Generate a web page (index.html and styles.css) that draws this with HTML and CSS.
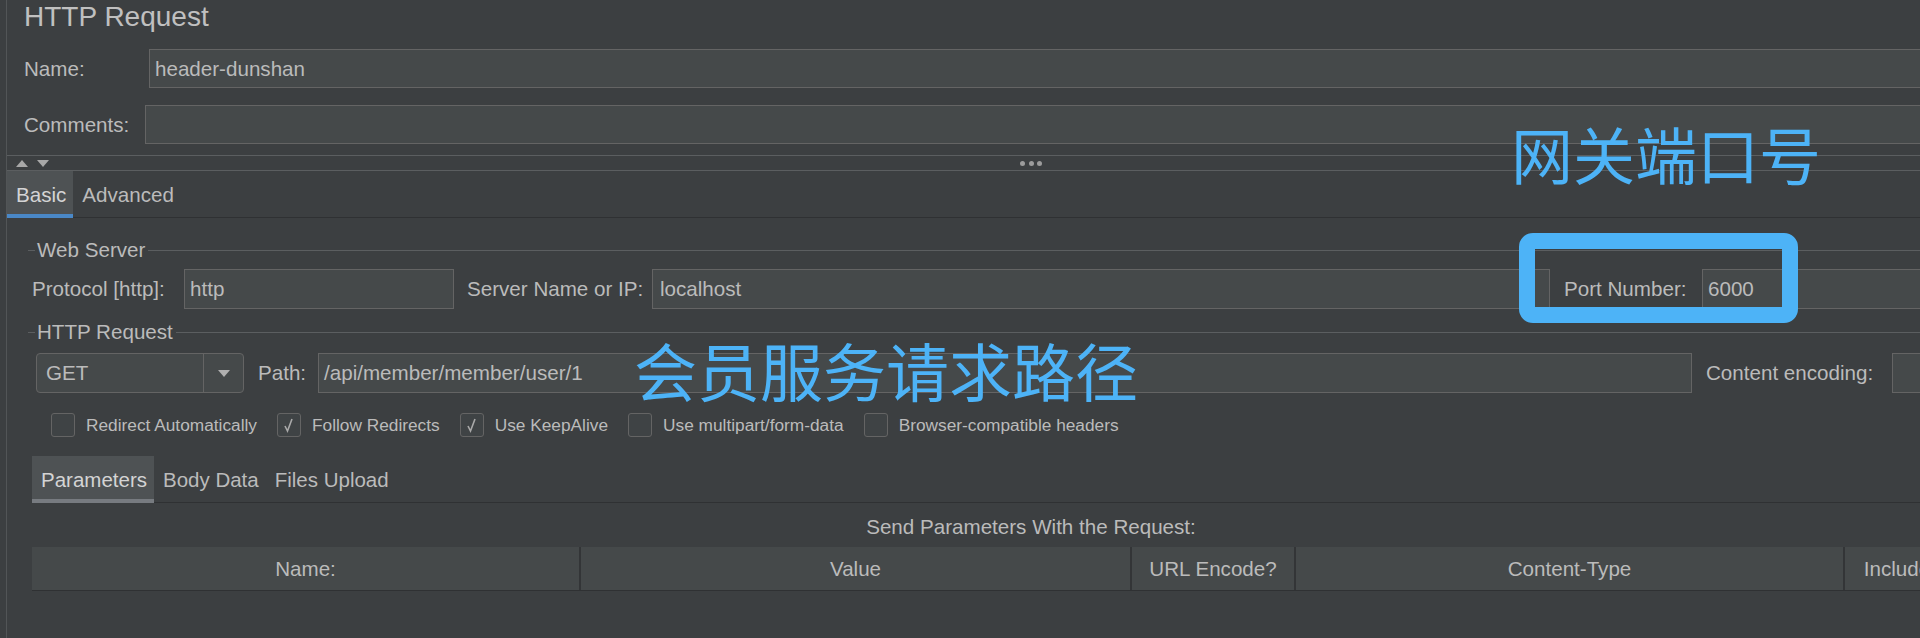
FILE: index.html
```html
<!DOCTYPE html>
<html lang="zh-CN">
<head>
<meta charset="utf-8">
<title>HTTP Request</title>
<link rel="stylesheet" href="styles.css">
</head>
<body>
<div class="panel">
  <div class="title">HTTP Request</div>
  <div class="frow name-row">
    <span class="name-label">Name:</span>
    <div class="input grow">header-dunshan</div>
  </div>
  <div class="frow comments-row">
    <span class="comments-label">Comments:</span>
    <div class="input grow"></div>
  </div>
  <div class="splitter">
    <div class="arrows">
      <svg width="12" height="7" viewBox="0 0 12 7"><polygon points="0,7 12,7 6,0" fill="#a8a8a8"/></svg>
      <svg width="12" height="7" viewBox="0 0 12 7"><polygon points="0,0 12,0 6,7" fill="#a8a8a8"/></svg>
    </div>
    <div class="dots"><i></i><i></i><i></i></div>
    <div></div>
  </div>
  <div class="tabs main-tabs">
    <div class="tab active">Basic</div>
    <div class="tab">Advanced</div>
  </div>

  <div class="group">
    <div class="gtitle"><span>Web Server</span></div>
    <div class="row ws-row">
      <span class="lbl lbl-protocol">Protocol [http]:</span>
      <div class="input in-protocol">http</div>
      <span class="lbl lbl-server">Server Name or IP:</span>
      <div class="input in-server">localhost</div>
      <span class="lbl lbl-port">Port Number:</span>
      <div class="input grow">6000</div>
    </div>

    <div class="gtitle gtitle-req"><span>HTTP Request</span></div>
    <div class="row req-row">
      <div class="combo">
        <div class="combo-text">GET</div>
        <div class="combo-btn">
          <svg width="12" height="7" viewBox="0 0 12 7"><polygon points="0,0 12,0 6,7" fill="#b0b0b0"/></svg>
        </div>
      </div>
      <span class="lbl lbl-path">Path:</span>
      <div class="input in-path">/api/member/member/user/1</div>
      <span class="lbl lbl-enc">Content encoding:</span>
      <div class="input grow"></div>
    </div>

    <div class="checks">
      <label class="cb"><span class="box"></span>Redirect Automatically</label>
      <label class="cb"><span class="box"><svg width="22" height="22" viewBox="0 0 22 22"><polyline points="7,12 9.5,17 14,5" fill="none" stroke="#a9a9a9" stroke-width="1.6"/></svg></span>Follow Redirects</label>
      <label class="cb"><span class="box"><svg width="22" height="22" viewBox="0 0 22 22"><polyline points="7,12 9.5,17 14,5" fill="none" stroke="#a9a9a9" stroke-width="1.6"/></svg></span>Use KeepAlive</label>
      <label class="cb"><span class="box"></span>Use multipart/form-data</label>
      <label class="cb"><span class="box"></span>Browser-compatible headers</label>
    </div>

    <div class="params">
      <div class="tabs sub-tabs">
        <div class="tab active">Parameters</div>
        <div class="tab">Body Data</div>
        <div class="tab">Files Upload</div>
      </div>
      <div class="send-label">Send Parameters With the Request:</div>
      <div class="table-head">
        <div class="th">Name:</div>
        <div class="th">Value</div>
        <div class="th">URL Encode?</div>
        <div class="th">Content-Type</div>
        <div class="th">Include Equals?</div>
      </div>
    </div>
  </div>

  <div class="note note-port">网关端口号</div>
  <div class="note note-path">会员服务请求路径</div>
  <div class="highlight"></div>
</div>
</body>
</html>
```

FILE: styles.css
```css
* {
  box-sizing: border-box;
}

body {
  margin: 0;
  width: 1920px;
  height: 638px;
  overflow: hidden;
  background: #3c3f41;
  font-family: "Liberation Sans", Arial, sans-serif;
  font-size: 20.6px;
  color: #bbbbbb;
}

.panel {
  position: relative;
  margin-left: 6px;
  width: 2049px;
  height: 638px;
  border-left: 1px solid #525557;
}

.title {
  height: 34px;
  line-height: 34px;
  font-size: 28px;
  padding-left: 17px;
  color: #c0c0c0;
}

.frow {
  display: flex;
  align-items: center;
  height: 39px;
  padding-left: 17px;
  padding-right: 25px;
}

.name-row {
  margin-top: 15px;
}

.name-label {
  width: 125px;
}

.comments-row {
  margin-top: 17px;
}

.comments-label {
  width: 121px;
}

.input {
  height: 100%;
  background: #45494a;
  border: 1px solid #646464;
  display: flex;
  align-items: center;
  padding: 0 5px;
  white-space: nowrap;
  overflow: hidden;
  color: #bbbbbb;
}

.grow {
  flex: 1;
}

.splitter {
  margin-top: 11px;
  height: 16px;
  border-top: 1px solid #5b5e60;
  border-bottom: 1px solid #5b5e60;
  display: grid;
  grid-template-columns: 1fr auto 1fr;
  align-items: center;
}

.arrows {
  display: flex;
  gap: 9px;
  padding-left: 9px;
}

.arrows svg {
  display: block;
}

.dots {
  display: flex;
  gap: 3.5px;
}

.dots i {
  width: 5px;
  height: 5px;
  border-radius: 50%;
  background: #9c9c9c;
}

.tabs {
  display: flex;
  height: 47px;
  box-shadow: inset 0 -1px #2f3133;
}

.tab {
  display: flex;
  align-items: center;
  height: 100%;
  padding: 0 7px 0 9px;
  white-space: nowrap;
}

.main-tabs .tab.active {
  background: #4e5254;
  box-shadow: inset 0 -4px #4a88c7;
  color: #d4d4d4;
}

.group {
  margin-left: 21px;
  margin-right: 25px;
}

.gtitle {
  display: flex;
  align-items: center;
  height: 24px;
  margin-top: 20px;
}

.gtitle::before {
  content: "";
  width: 7px;
  height: 1px;
  background: #5b5e60;
}

.gtitle::after {
  content: "";
  flex: 1;
  height: 1px;
  background: #5b5e60;
}

.gtitle span {
  padding: 0 3px 0 2px;
}

.gtitle-req {
  margin-top: 11px;
}

.row {
  display: flex;
  align-items: center;
  height: 40px;
}

.ws-row {
  margin-top: 7px;
}

.req-row {
  margin-top: 9px;
}

.lbl {
  white-space: nowrap;
  flex: none;
}

.lbl-protocol {
  width: 156px;
  padding-left: 4px;
}

.in-protocol {
  width: 270px;
  flex: none;
}

.lbl-server {
  width: 185px;
  margin-left: 13px;
}

.in-server {
  width: 898px;
  flex: none;
  padding-left: 7px;
}

.lbl-port {
  width: 138px;
  margin-left: 14px;
}

.combo {
  display: flex;
  margin-left: 8px;
  width: 208px;
  height: 100%;
  border: 1px solid #646464;
  border-radius: 4px;
  background: #45494a;
  flex: none;
}

.combo-text {
  flex: 1;
  display: flex;
  align-items: center;
  padding-left: 9px;
}

.combo-btn {
  width: 40px;
  border-left: 1px solid #646464;
  display: flex;
  align-items: center;
  justify-content: center;
}

.lbl-path {
  width: 60px;
  margin-left: 14px;
}

.in-path {
  width: 1374px;
  flex: none;
}

.lbl-enc {
  width: 186px;
  margin-left: 14px;
}

.checks {
  display: flex;
  align-items: center;
  height: 24px;
  margin-top: 20px;
  padding-left: 23px;
  font-size: 17.3px;
}

.cb {
  display: flex;
  align-items: center;
  gap: 11px;
  margin-right: 20px;
  white-space: nowrap;
}

.box {
  width: 24px;
  height: 24px;
  border: 1px solid #646464;
  border-radius: 3px;
  background: #3f4345;
  display: flex;
  align-items: center;
  justify-content: center;
}

.box svg {
  display: block;
}

.params {
  margin-left: 4px;
}

.sub-tabs {
  margin-top: 19px;
  font-size: 20.5px;
}

.sub-tabs .tab.active {
  background: #4e5254;
  box-shadow: inset 0 -4px #777b80;
  color: #d4d4d4;
}

.send-label {
  height: 44px;
  padding-top: 4px;
  display: flex;
  align-items: center;
  justify-content: center;
}

.table-head {
  display: grid;
  grid-template-columns: 549px 551px 164px 549px 186px;
  height: 44px;
  background: #45494a;
  border-bottom: 1px solid #2f3133;
  overflow: hidden;
}

.th {
  display: flex;
  align-items: center;
  justify-content: center;
  white-space: nowrap;
  border-right: 2px solid #333537;
}

.note {
  position: absolute;
  font-family: "Noto Sans CJK SC", "Liberation Sans", sans-serif;
  line-height: 1;
  color: #4db3f7;
  white-space: nowrap;
}

.note-port {
  left: 1504px;
  top: 122px;
  font-size: 62px;
}

.note-path {
  left: 627px;
  top: 337px;
  font-size: 63px;
}

.highlight {
  position: absolute;
  left: 1512px;
  top: 233px;
  width: 279px;
  height: 90px;
  border: 16px solid #4db3f7;
  border-radius: 14px;
}
```
